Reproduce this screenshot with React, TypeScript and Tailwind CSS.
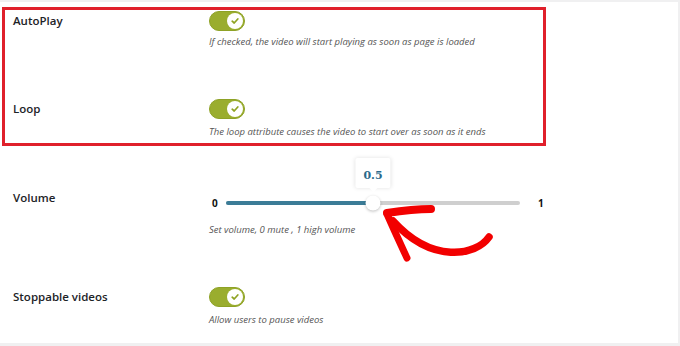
import React from 'react'

function Toggle() {
  return (
    <div className="relative w-[36px] h-[20px] rounded-full bg-[#9aad2e] border border-[#8ea226]">
      <div className="absolute right-[1px] top-[1px] w-[16px] h-[16px] rounded-full bg-white flex items-center justify-center">
        <svg width="8" height="8" viewBox="0 0 8 8" fill="none">
          <path d="M1.2 4.2 L3.2 6 L6.8 2" stroke="#8fa323" strokeWidth="1.7" strokeLinecap="round" strokeLinejoin="round" />
        </svg>
      </div>
    </div>
  )
}

function Desc({ children }: { children: React.ReactNode }) {
  return <p className="text-[9.5px] leading-[14px] italic text-[#555]">{children}</p>
}

function Label({ children, className = '' }: { children: React.ReactNode; className?: string }) {
  return (
    <div className={`w-[196px] shrink-0 text-[11.5px] font-semibold text-[#1d2327] ${className}`}>
      {children}
    </div>
  )
}

function Slider() {
  const value = 0.5
  return (
    <div className="flex items-center h-[20px]">
      <span className="w-[17px] pl-[3px] text-[10px] font-bold text-[#111]">0</span>
      <div className="relative w-[294px] h-[4px] rounded-full bg-[#cfcfcf]">
        <div className="h-full rounded-full bg-[#3b7c97]" style={{ width: `${value * 100}%` }} />
        <div
          className="absolute top-1/2 w-[15px] h-[15px] -translate-x-1/2 -translate-y-1/2 rounded-full bg-white shadow-[0_1px_3px_rgba(0,0,0,0.25)]"
          style={{ left: `${value * 100}%` }}
        />
        <div
          className="absolute bottom-[17px] -translate-x-1/2 px-[8px] py-[3px] bg-white rounded-[2px] shadow-[0_0_4px_rgba(0,0,0,0.12)]"
          style={{ left: `${value * 100}%` }}
        >
          <span className="text-[11px] font-bold text-[#2b6a8c] font-['DejaVu_Serif',serif]">0.5</span>
          <div className="absolute left-1/2 -bottom-[4px] -translate-x-1/2 w-0 h-0 border-x-[4px] border-x-transparent border-t-[4px] border-t-white" />
        </div>
      </div>
      <span className="ml-[18px] text-[10px] font-bold text-[#111]">1</span>
    </div>
  )
}

export default function App() {
  return (
    <div className="w-[680px] h-[346px] bg-[#f0f0f1] pt-[2px] font-['Open_Sans',sans-serif]">
      <div className="relative w-[678px] h-[341px] bg-white pt-[5px]">
        <div className="ml-[2px] w-[544px] border-[3px] border-[#e0202b] pl-[8px] pt-[1px] pb-[4px]">
          <div className="flex">
            <Label className="pt-[1px]">AutoPlay</Label>
            <div>
              <Toggle />
              <div className="mt-[4px]">
                <Desc>If checked, the video will start playing as soon as page is loaded</Desc>
              </div>
            </div>
          </div>
          <div className="flex mt-[50px]">
            <Label className="pt-[1px]">Loop</Label>
            <div>
              <Toggle />
              <div className="mt-[6px]">
                <Desc>The loop attribute causes the video to start over as soon as it ends</Desc>
              </div>
            </div>
          </div>
        </div>

        <div className="flex pl-[13px] mt-[47px]">
          <Label className="-mt-[4px]">Volume</Label>
          <div>
            <Slider />
            <div className="mt-[10px]">
              <Desc>Set volume, 0 mute , 1 high volume</Desc>
            </div>
          </div>
        </div>

        <div className="flex pl-[13px] mt-[50px]">
          <Label className="pt-[1px]">Stoppable videos</Label>
          <div>
            <Toggle />
            <div className="mt-[6px]">
              <Desc>Allow users to pause videos</Desc>
            </div>
          </div>
        </div>

        <svg className="absolute left-0 top-0 pointer-events-none" width="678" height="341" viewBox="0 2 678 341">
          <g stroke="#f20000" strokeLinecap="round" strokeLinejoin="round" fill="none">
            <path d="M489 237 C476 256, 432 264, 393 221" strokeWidth="7.5" />
            <path d="M387 213 C400 211, 415 209, 431 209" strokeWidth="8" />
            <path d="M387 214 C394 230, 401 245, 407 258" strokeWidth="7" />
          </g>
        </svg>
      </div>
    </div>
  )
}
